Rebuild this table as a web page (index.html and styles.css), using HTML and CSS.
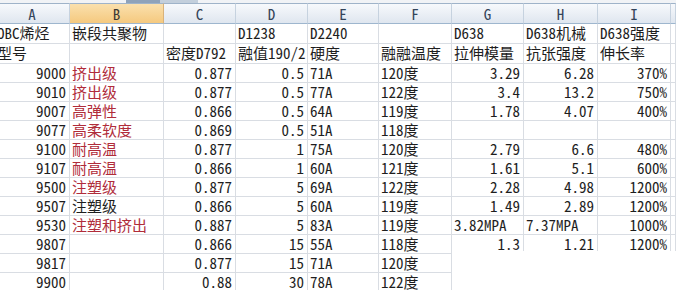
FILE: index.html
```html
<!DOCTYPE html>
<html lang="zh">
<head>
<meta charset="utf-8">
<title>OBC 烯烃嵌段共聚物</title>
<link rel="stylesheet" href="styles.css">
</head>
<body>
<div class="frame">
  <div class="topbar"><span class="tab1"></span><span class="tab2"></span></div>
  <div class="sheet">
    <div class="h">A</div><div class="h sel">B</div><div class="h">C</div><div class="h">D</div><div class="h">E</div><div class="h">F</div><div class="h">G</div><div class="h">H</div><div class="h">I</div><div class="h"></div>

    <div class="c">OBC烯烃</div><div class="c">嵌段共聚物</div><div class="c"></div><div class="c">D1238</div><div class="c">D2240</div><div class="c"></div><div class="c">D638</div><div class="c">D638机械</div><div class="c">D638强度</div><div class="c"></div>
    <div class="c">型号</div><div class="c"></div><div class="c">密度D792</div><div class="c">融值190/2</div><div class="c">硬度</div><div class="c">融融温度</div><div class="c">拉伸模量</div><div class="c">抗张强度</div><div class="c">伸长率</div><div class="c"></div>

    <div class="c n">9000</div><div class="c r">挤出级</div><div class="c n">0.877</div><div class="c n">0.5</div><div class="c">71A</div><div class="c">120度</div><div class="c n">3.29</div><div class="c n">6.28</div><div class="c n">370%</div><div class="c"></div>
    <div class="c n">9010</div><div class="c r">挤出级</div><div class="c n">0.877</div><div class="c n">0.5</div><div class="c">77A</div><div class="c">122度</div><div class="c n">3.4</div><div class="c n">13.2</div><div class="c n">750%</div><div class="c"></div>
    <div class="c n">9007</div><div class="c r">高弹性</div><div class="c n">0.866</div><div class="c n">0.5</div><div class="c">64A</div><div class="c">119度</div><div class="c n">1.78</div><div class="c n">4.07</div><div class="c n">400%</div><div class="c"></div>
    <div class="c n">9077</div><div class="c r">高柔软度</div><div class="c n">0.869</div><div class="c n">0.5</div><div class="c">51A</div><div class="c">118度</div><div class="c"></div><div class="c"></div><div class="c"></div><div class="c"></div>
    <div class="c n">9100</div><div class="c r">耐高温</div><div class="c n">0.877</div><div class="c n">1</div><div class="c">75A</div><div class="c">120度</div><div class="c n">2.79</div><div class="c n">6.6</div><div class="c n">480%</div><div class="c"></div>
    <div class="c n">9107</div><div class="c r">耐高温</div><div class="c n">0.866</div><div class="c n">1</div><div class="c">60A</div><div class="c">121度</div><div class="c n">1.61</div><div class="c n">5.1</div><div class="c n">600%</div><div class="c"></div>
    <div class="c n">9500</div><div class="c r">注塑级</div><div class="c n">0.877</div><div class="c n">5</div><div class="c">69A</div><div class="c">122度</div><div class="c n">2.28</div><div class="c n">4.98</div><div class="c n">1200%</div><div class="c"></div>
    <div class="c n">9507</div><div class="c">注塑级</div><div class="c n">0.866</div><div class="c n">5</div><div class="c">60A</div><div class="c">119度</div><div class="c n">1.49</div><div class="c n">2.89</div><div class="c n">1200%</div><div class="c"></div>
    <div class="c n">9530</div><div class="c r">注塑和挤出</div><div class="c n">0.887</div><div class="c n">5</div><div class="c">83A</div><div class="c">119度</div><div class="c">3.82MPA</div><div class="c">7.37MPA</div><div class="c n">1000%</div><div class="c"></div>
    <div class="c n">9807</div><div class="c"></div><div class="c n">0.866</div><div class="c n">15</div><div class="c">55A</div><div class="c">118度</div><div class="c n">1.3</div><div class="c n">1.21</div><div class="c n">1200%</div><div class="c"></div>
    <div class="c n">9817</div><div class="c"></div><div class="c n">0.877</div><div class="c n">15</div><div class="c">71A</div><div class="c">120度</div><div class="c"></div><div class="c"></div><div class="c"></div><div class="c"></div>
    <div class="c n">9900</div><div class="c"></div><div class="c n">0.88</div><div class="c n">30</div><div class="c">78A</div><div class="c">122度</div><div class="c"></div><div class="c"></div><div class="c"></div><div class="c"></div>
  </div>
  <div class="blank"></div>
</div>
</body>
</html>
```

FILE: styles.css
```css
html, body {
  margin: 0;
  padding: 0;
  background: #ffffff;
  overflow: hidden;
}

.frame {
  position: relative;
  width: 676px;
  height: 290px;
  overflow: hidden;
  font-family: "Noto Sans Mono CJK SC", "Noto Sans CJK SC", "Liberation Mono", monospace;
  font-size: 15px;
  color: #1e1e1e;
}

.topbar {
  height: 3px;
  background: #f1f3f6;
  display: flex;
}

.tab1 {
  margin-left: 126px;
  width: 34px;
  background: #8ea2ba;
}

.tab2 {
  width: 38px;
  background: #c3cfdc;
}

.sheet {
  display: grid;
  grid-template-columns: 75px 94px 72px 72px 71px 73px 72px 74px 73px 1fr;
  grid-template-rows: 21px 20px 20px repeat(12, 19px);
  margin-left: -5px;
  width: 681px;
}

.h {
  box-sizing: border-box;
  border-top: 1px solid #9fb3c9;
  border-right: 1px solid #c6d2df;
  border-bottom: 1px solid #9eb6ce;
  background: linear-gradient(#f7f9fc, #dfe6ef);
  color: #34445a;
  text-align: center;
  line-height: 19px;
  font-size: 15px;
}

.h.sel {
  background: linear-gradient(#fae0ad, #f5c97f);
  border-right-color: #d9b27a;
  color: #3c3a36;
}

.c {
  box-sizing: border-box;
  border-right: 1px solid #d9dde3;
  border-bottom: 1px solid #d9dde3;
  padding: 0 2px 0 2px;
  line-height: 18px;
  white-space: nowrap;
}

.n {
  text-align: right;
  padding-right: 3px;
}

.r {
  color: #b02c3a;
}

.blank {
  position: absolute;
  left: 452px;
  top: 251px;
  right: 0;
  bottom: 0;
  background: #ffffff;
}
```
